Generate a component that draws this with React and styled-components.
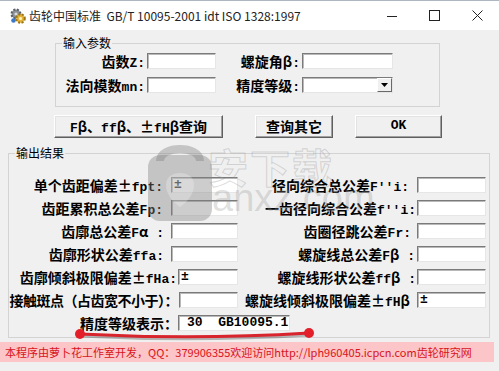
import styled, { createGlobalStyle } from 'styled-components';

const GlobalStyle = createGlobalStyle`
  html, body { margin: 0; padding: 0; background: #f0f0f0; }
  body { font-family: "Noto Sans CJK SC", sans-serif; }
`;

const Window = styled.div`
  position: relative;
  width: 499px;
  height: 371px;
  overflow: hidden;
  background: #f0f0f0;
  display: flex;
  flex-direction: column;
`;

const TitleBar = styled.div`
  height: 30px;
  box-sizing: border-box;
  border-top: 1px solid #aeb6c0;
  background: #fff;
  display: flex;
  align-items: center;
  padding-left: 10px;
  flex-shrink: 0;
`;

const Title = styled.span`
  margin-left: 3px;
  font-family: "Noto Sans CJK SC", sans-serif;
  font-size: 12px;
  color: #222;
  white-space: pre;
`;

const Controls = styled.div`
  margin-left: auto;
  display: flex;
  height: 100%;
`;

const Ctrl = styled.div`
  width: 43px;
  display: flex;
  align-items: center;
  justify-content: center;
`;

const Group = styled.fieldset`
  margin: ${p => p.$top}px 0 0 ${p => p.$left}px;
  width: ${p => p.$width}px;
  box-sizing: border-box;
  min-width: 0;
  border: 1px solid #d3d3d3;
  padding: ${p => p.$pad};
  flex-shrink: 0;
`;

const Legend = styled.legend`
  margin-left: 6px;
  padding: 0 1px;
  font-size: 12px;
  line-height: 14px;
  color: #000;
`;

const InputGrid = styled.div`
  display: grid;
  grid-template-columns: 91px 69px 86px 91px;
  row-gap: 8px;
  align-items: center;
`;

const Label = styled.span`
  height: 16px;
  display: flex;
  align-items: baseline;
  justify-content: flex-end;
  font-family: "Noto Sans CJK SC", sans-serif;
  font-weight: 700;
  font-size: 14px;
  line-height: 16px;
  letter-spacing: ${p => p.$ls ?? 0}px;
  color: #000;
  white-space: pre;
  padding-right: ${p => p.$gap ?? 2}px;
  flex-shrink: 0;
`;

const Lat = styled.span`
  font-family: "Liberation Mono", monospace;
  font-size: 13px;
  line-height: 16px;
  font-weight: 700;
  letter-spacing: 0;
`;

const Field = styled.div`
  width: ${p => p.$w}px;
  height: 16px;
  box-sizing: border-box;
  background: #fff;
  border: 1px solid;
  border-color: #7a7a7a #e6e6e6 #e6e6e6 #7a7a7a;
  box-shadow: inset 1px 1px 0 #b9b9b9;
  display: flex;
  align-items: center;
  padding-left: ${p => p.$pl ?? 2}px;
  font-family: "Liberation Mono", monospace;
  font-weight: 700;
  font-size: 13px;
  line-height: 14px;
  white-space: pre;
  color: #000;
  flex-shrink: 0;
`;

const Select = styled(Field)`
  justify-content: flex-end;
  padding: 0;
`;

const Arrow = styled.div`
  width: 15px;
  height: 14px;
  box-sizing: border-box;
  background: #f0f0f0;
  border: 1px solid;
  border-color: #fff #696969 #696969 #fff;
  display: flex;
  align-items: center;
  justify-content: center;
`;

const ButtonRow = styled.div`
  display: flex;
  margin: 8px 0 0 54px;
  flex-shrink: 0;
`;

const Button = styled.div`
  width: ${p => p.$w}px;
  margin-left: ${p => p.$ml ?? 0}px;
  height: 23px;
  box-sizing: border-box;
  background: #f0f0f0;
  border: 1px solid;
  border-color: #fff #5f5f5f #5f5f5f #fff;
  box-shadow: inset -1px -1px 0 #a0a0a0, inset 1px 1px 0 #e3e3e3;
  display: flex;
  align-items: baseline;
  justify-content: center;
  padding-top: 2px;
  font-weight: 700;
  font-size: 14px;
  line-height: 16px;
  white-space: pre;
`;

const OutRows = styled.div`
  display: flex;
  flex-direction: column;
  gap: 7px;
`;

const OutRow = styled.div`
  display: grid;
  grid-template-columns: 229px 1fr;
  align-items: center;
  height: 16px;
`;

const Cell = styled.div`
  display: flex;
  justify-content: flex-end;
  align-items: center;
`;

const LastRow = styled.div`
  display: flex;
  align-items: center;
  height: 16px;
`;

const StatusBar = styled.div`
  margin-top: 4px;
  width: 494px;
  height: 20px;
  flex-shrink: 0;
  background: #fcc5c7;
  display: flex;
  align-items: center;
  padding-left: 5px;
  box-sizing: border-box;
  font-size: 11px;
  color: #d8141c;
  white-space: nowrap;
`;

const Overlay = styled.svg`
  position: absolute;
  left: 0;
  top: 0;
  pointer-events: none;
`;

const Watermark = styled.div`
  position: absolute;
  left: 146px;
  top: 141px;
  pointer-events: none;
`;

const WmChars = styled.span`
  position: absolute;
  left: 62px;
  top: -4px;
  font-size: 40px;
  font-weight: 700;
  letter-spacing: 2px;
  color: transparent;
  -webkit-text-stroke: 1px rgba(150, 150, 150, 0.35);
  white-space: nowrap;
`;

const WmText = styled.span`
  position: absolute;
  left: 66px;
  top: 36px;
  font-family: "Liberation Sans", sans-serif;
  font-size: 38px;
  color: rgba(150, 150, 150, 0.3);
  white-space: nowrap;
`;

const LAT = /([A-Za-z0-9:'.\- ]+)/;

function Txt({ text }) {
  return text.split(LAT).map((p, i) => (i % 2 ? <Lat key={i}>{p}</Lat> : p));
}

const leftRows = [
  { label: '单个齿距偏差±fpt:', value: '±', w: 67, gap: 8 },
  { label: '齿距累积总公差Fp:', w: 67, gap: 8 },
  { label: '齿廓总公差Fα :', w: 67, gap: 7 },
  { label: '齿廓形状公差ffa:', w: 67, gap: 7 },
  { label: '齿廓倾斜极限偏差±fHa:', value: '±', w: 60, gap: 1 },
  { label: '接触斑点（占齿宽不小于）：', w: 59, gap: 1, ls: -0.5 },
];

const rightRows = [
  { label: "径向综合总公差F''i:", gap: 8 },
  { label: "一齿径向综合公差f''i:", gap: 1 },
  { label: '齿圈径跳公差Fr:', gap: 6 },
  { label: '螺旋线总公差Fβ :', gap: 2 },
  { label: '螺旋线形状公差ffβ :', gap: 1 },
  { label: '螺旋线倾斜极限偏差±fHβ', value: '±', gap: 7 },
];

function AppIcon() {
  return (
    <svg width="16" height="16" viewBox="0 0 16 16">
      <circle cx="6" cy="6" r="4.5" fill="#8a8f96" stroke="#5a5f66" strokeWidth="2" strokeDasharray="2 1.6" />
      <circle cx="6" cy="6" r="1.6" fill="#d8dce0" />
      <circle cx="10.5" cy="10.5" r="4.3" fill="#e2b53a" stroke="#9c7414" strokeWidth="2" strokeDasharray="2 1.5" />
      <circle cx="10.5" cy="10.5" r="1.5" fill="#fff3c4" />
      <circle cx="3.5" cy="12.5" r="2.3" fill="#3d78c8" />
    </svg>
  );
}

export default function App() {
  return (
    <>
      <GlobalStyle />
      <Window>
        <TitleBar>
          <AppIcon />
          <Title>齿轮中国标准  GB/T 10095-2001 idt ISO 1328:1997</Title>
          <Controls>
            <Ctrl>
              <svg width="10" height="10"><line x1="0" y1="5.5" x2="10" y2="5.5" stroke="#222" /></svg>
            </Ctrl>
            <Ctrl>
              <svg width="11" height="11"><rect x="0.5" y="0.5" width="10" height="10" fill="none" stroke="#222" /></svg>
            </Ctrl>
            <Ctrl>
              <svg width="11" height="11">
                <path d="M0.5 0.5 L10.5 10.5 M10.5 0.5 L0.5 10.5" stroke="#222" />
              </svg>
            </Ctrl>
          </Controls>
        </TitleBar>

        <Group $top={6} $left={55} $width={385} $pad="3px 0 13px 0">
          <Legend>输入参数</Legend>
          <InputGrid>
            <Label><Txt text="齿数Z:" /></Label>
            <Field $w={69} />
            <Label>螺旋角β<Lat>:</Lat></Label>
            <Field $w={91} />
            <Label><Txt text="法向模数mn:" /></Label>
            <Field $w={69} />
            <Label>精度等级<Lat>:</Lat></Label>
            <Select $w={91}>
              <Arrow>
                <svg width="7" height="4"><path d="M0 0 H7 L3.5 4 Z" fill="#000" /></svg>
              </Arrow>
            </Select>
          </InputGrid>
        </Group>

        <ButtonRow>
          <Button $w={169}><Txt text="Fβ、ffβ、±fHβ查询" /></Button>
          <Button $w={78} $ml={32}>查询其它</Button>
          <Button $w={87} $ml={22}><Lat>OK</Lat></Button>
        </ButtonRow>

        <Group $top={8} $left={8} $width={482} $pad="17px 3px 6px 0">
          <Legend>输出结果</Legend>
          <OutRows>
            {leftRows.map((l, i) => {
              const r = rightRows[i];
              return (
                <OutRow key={i}>
                  <Cell>
                    <Label $gap={l.gap} $ls={l.ls}><Txt text={l.label} /></Label>
                    <Field $w={l.w}>{l.value}</Field>
                  </Cell>
                  <Cell>
                    <Label $gap={r.gap}><Txt text={r.label} /></Label>
                    <Field $w={69}>{r.value}</Field>
                  </Cell>
                </OutRow>
              );
            })}
            <LastRow>
              <Label style={{ width: 169 }} $gap={0}>精度等级表示：</Label>
              <Field $w={112} $pl={8}>30  GB10095.1</Field>
            </LastRow>
          </OutRows>
        </Group>

        <StatusBar>本程序由萝卜花工作室开发，QQ：379906355欢迎访问http://lph960405.icpcn.com齿轮研究网</StatusBar>

        <Watermark>
          <svg width="70" height="82" viewBox="0 0 70 82">
            <path d="M14 20 C14 4 54 4 54 20" fill="none" stroke="rgba(130,130,130,0.4)" strokeWidth="8" />
            <rect x="2" y="14" width="64" height="66" rx="12" fill="rgba(130,130,130,0.4)" />
            <path d="M34 32 C42 32 48 36 48 44 C48 54 40 62 34 66 C28 62 20 54 20 44 C20 36 26 32 34 32 Z" fill="rgba(255,255,255,0.25)" />
          </svg>
          <WmChars>安下载</WmChars>
          <WmText>anxz.com</WmText>
        </Watermark>

        <Overlay width="499" height="371">
          <path d="M80 336 Q195 342 309 335" fill="none" stroke="rgba(0,0,0,0.25)" strokeWidth="3" strokeLinecap="round" />
          <path d="M80 334 Q195 340 309 333" fill="none" stroke="#d8242c" strokeWidth="3" strokeLinecap="round" />
          <circle cx="80" cy="334" r="5" fill="#e3202a" />
          <circle cx="309" cy="333" r="5" fill="#e3202a" />
        </Overlay>
      </Window>
    </>
  );
}
